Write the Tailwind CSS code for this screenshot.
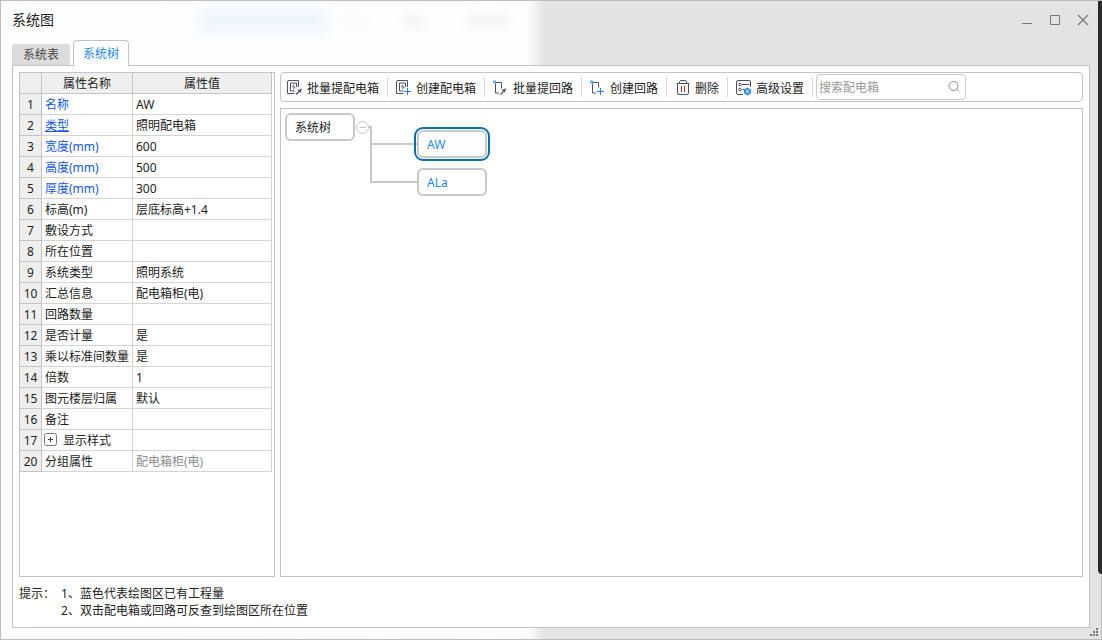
<!DOCTYPE html>
<html lang="zh-CN">
<head>
<meta charset="utf-8">
<meta name="viewport" content="width=device-width, initial-scale=1">
<title>系统图</title>
<script src="https://cdn.jsdelivr.net/npm/@tailwindcss/browser@4"></script>
</head>
<body class="font-['Noto_Sans','Noto_Sans_CJK_SC',sans-serif] text-xs text-[#222]">
<div class="relative flex min-h-screen flex-col border border-[#bdbdbd] bg-[linear-gradient(to_right,#fdfdfe_0,#fefefe_526px,#e3e3e3_544px,#e3e3e3_100%)] pr-[11px] pb-[11px] pl-[11px]">
  <div class="absolute top-2 left-[196px] h-6 w-[132px] rounded bg-[#f0f6fd] blur-[6px]"></div>
  <div class="absolute top-3 left-[342px] h-4 w-6 rounded bg-[#fafafa] blur-[5px]"></div>
  <div class="absolute top-3 left-[402px] h-4 w-6 rounded bg-[#f6f6f6] blur-[5px]"></div>
  <div class="absolute top-3 left-[464px] h-4 w-11 rounded bg-[#f6f6f6] blur-[5px]"></div>
  <div class="absolute top-0 -right-px h-[573px] w-[4px] rounded-bl-sm bg-[#2b2b2b]"></div>
  <svg class="absolute right-[3px] bottom-[3px] size-[8px]" viewBox="0 0 8 8" fill="#6f757f" shape-rendering="crispEdges" aria-hidden="true"><path d="M6 0h2v2h-2zM3 3h2v2h-2zM6 3h2v2h-2zM0 6h2v2h-2zM3 6h2v2h-2zM6 6h2v2h-2z"/></svg>

  <header class="relative flex h-[39px] items-center justify-between pr-px pb-[2px]">
    <h1 class="text-sm text-[#222]">系统图</h1>
    <div class="flex gap-4 text-[#777]">
      <button aria-label="最小化" class="size-3"><svg class="size-3" viewBox="0 0 12 12" fill="none" stroke="currentColor"><path d="M1 9.500h10"/></svg></button>
      <button aria-label="最大化" class="size-3"><svg class="size-3" viewBox="0 0 12 12" fill="none" stroke="currentColor"><path d="M1.500 1.500h9v9h-9z"/></svg></button>
      <button aria-label="关闭" class="size-3"><svg class="size-3" viewBox="0 0 12 12" fill="none" stroke="currentColor" stroke-width="1.200"><path d="M1 1l10 10M11 1L1 11"/></svg></button>
    </div>
  </header>

  <div role="tablist" class="relative z-10 -mb-px flex items-end gap-[3px]">
    <button role="tab" aria-selected="false" class="mb-px h-[21px] w-[58px] rounded-t-[3px] bg-[#dcdcdc] text-[#444]">系统表</button>
    <button role="tab" aria-selected="true" class="h-[26px] w-14 rounded-t border border-b-0 border-[#c4c4c8] bg-white pt-px text-[#1a86f2]">系统树</button>
  </div>

  <main class="relative flex flex-1 flex-col border border-[#c4c4c8] bg-white px-[6px] pt-[6px] pb-2">
    <div class="flex flex-1 gap-[5px]">
      <section class="w-64 shrink-0 border border-[#c4c4c8]">
        <table class="w-[252px] table-fixed border-separate border-spacing-0 leading-4 [&_td]:h-[21px] [&_td]:border-r [&_td]:border-b [&_td]:border-[#d4d4d4] [&_td]:pt-[2px] [&_td]:pr-0 [&_td]:pb-0 [&_td]:pl-[3px] [&_td]:whitespace-nowrap [&_th]:h-[21px] [&_th]:border-r [&_th]:border-b [&_th]:border-[#c4c4c4] [&_th]:bg-[#efefef] [&_th]:px-0 [&_th]:pt-[2px] [&_th]:pb-0 [&_th]:font-normal">
          <colgroup><col class="w-[22px]"><col class="w-[91px]"><col class="w-[139px]"></colgroup>
          <thead><tr><th></th><th scope="col">属性名称</th><th scope="col">属性值</th></tr></thead>
          <tbody>
            <tr><th scope="row">1</th><td class="text-[#1256f5]">名称</td><td>AW</td></tr>
            <tr><th scope="row">2</th><td class="text-[#1256f5]"><a href="#" class="underline underline-offset-1">类型</a></td><td>照明配电箱</td></tr>
            <tr><th scope="row">3</th><td class="text-[#1256f5]">宽度(mm)</td><td>600</td></tr>
            <tr><th scope="row">4</th><td class="text-[#1256f5]">高度(mm)</td><td>500</td></tr>
            <tr><th scope="row">5</th><td class="text-[#1256f5]">厚度(mm)</td><td>300</td></tr>
            <tr><th scope="row">6</th><td>标高(m)</td><td>层底标高+1.4</td></tr>
            <tr><th scope="row">7</th><td>敷设方式</td><td></td></tr>
            <tr><th scope="row">8</th><td>所在位置</td><td></td></tr>
            <tr><th scope="row">9</th><td>系统类型</td><td>照明系统</td></tr>
            <tr><th scope="row">10</th><td>汇总信息</td><td>配电箱柜(电)</td></tr>
            <tr><th scope="row">11</th><td>回路数量</td><td></td></tr>
            <tr><th scope="row">12</th><td>是否计量</td><td>是</td></tr>
            <tr><th scope="row">13</th><td>乘以标准间数量</td><td>是</td></tr>
            <tr><th scope="row">14</th><td>倍数</td><td>1</td></tr>
            <tr><th scope="row">15</th><td>图元楼层归属</td><td>默认</td></tr>
            <tr><th scope="row">16</th><td>备注</td><td></td></tr>
            <tr><th scope="row">17</th><td class="pl-[2px]!"><div class="flex items-start gap-[6px]"><button aria-label="展开显示样式" class="size-[13px]"><svg class="size-[13px]" viewBox="0 0 13 13" fill="none" stroke="#777"><rect x=".5" y=".5" width="12" height="12" rx="2"/><path d="M4 6.500h5M6.500 4v5" stroke="#444"/></svg></button>显示样式</div></td><td></td></tr>
            <tr><th scope="row">20</th><td>分组属性</td><td class="text-[#8c8c8c]">配电箱柜(电)</td></tr>
          </tbody>
        </table>
      </section>

      <section class="flex min-w-0 flex-1 flex-col gap-[6px]">
        <div role="toolbar" class="flex h-[30px] items-center rounded border border-[#c4c4c8] [&>button]:flex [&>button]:h-5 [&>button]:shrink-0 [&>button]:items-center [&>button]:gap-1 [&>button]:border-r [&>button]:border-[#d8d8dc] [&>button]:px-2 [&>button]:pt-[2px] [&>button]:whitespace-nowrap [&_span]:pt-px [&_svg]:size-4 [&_svg]:shrink-0">
          <button class="pl-[6px]!"><svg viewBox="0 0 16 16" fill="none" stroke="#4a5068"><path d="M11.500 7V.5H2A1.500 1.500 0 0 0 .5 2v11.500h7"/><path d="M9.500 7V3h-6v8h4"/><path d="M7.300 4.500L5.500 7H8L6.300 9.500" stroke-width=".9"/><path d="M9 14.500l3-3" stroke-width="1.300"/><path d="M11.300 9.800l2.700 2.700M12.500 11.300l2-2.300" stroke-width="1.600"/></svg><span>批量提配电箱</span></button>
          <button><svg viewBox="0 0 16 16" fill="none" stroke="#4a5068"><path d="M11.500 7V.5H2A1.500 1.500 0 0 0 .5 2v11.500h7"/><path d="M9.500 7V3h-6v8h4"/><path d="M7.300 4.500L5.500 7H8L6.300 9.500" stroke-width=".9"/><path d="M11.500 8v7M8 11.500h7" stroke="#1a80ee"/></svg><span>创建配电箱</span></button>
          <button><svg viewBox="0 0 16 16" fill="none" stroke="#4a5068"><path d="M3 2.500h5.500v6M2.500 3.500v9.500H6"/><path d="M7.500 14.500l3-3" stroke-width="1.300"/><path d="M9.500 9.500l2.500 2.500M10.700 11l2-2.300" stroke-width="1.600"/><circle cx="1.700" cy="2" r="1.200" stroke="#1a80ee"/></svg><span>批量提回路</span></button>
          <button><svg viewBox="0 0 16 16" fill="none" stroke="#4a5068"><path d="M3 2.500h5.500v5M2.500 3.500v9.500H6"/><path d="M10.500 8v7M7 11.500h7" stroke="#1a80ee"/><circle cx="1.700" cy="2" r="1.200" stroke="#1a80ee"/></svg><span>创建回路</span></button>
          <button><svg viewBox="0 0 16 16" fill="none" stroke="#4a5068"><path d="M1.500 3.500h13M4.500 3V2l1-1.500h5l1 1.500v1M2.500 4v9a1.500 1.500 0 0 0 1.500 1.500h8a1.500 1.500 0 0 0 1.500-1.500V4"/><path d="M6.500 6v6M9.500 6v6" stroke="#e01f2d"/></svg><span>删除</span></button>
          <button><svg viewBox="0 0 16 16" fill="none" stroke="#4a5068"><path d="M14.500 7V2A1.500 1.500 0 0 0 13 .5H2A1.500 1.500 0 0 0 .5 2v11A1.500 1.500 0 0 0 2 14.500h5"/><path d="M6 4.500h7M6.500 9.500h2"/><circle cx="4" cy="4.500" r="1.300"/><circle cx="4" cy="9.500" r="1.300"/><path d="M11.500 8l3 1.700v3.600l-3 1.700-3-1.700V9.700z" fill="#4f9df5" stroke="#3388ee"/><circle cx="11.500" cy="11.500" r="1.200" fill="#b9d9fb" stroke="none"/></svg><span>高级设置</span></button>
          <div class="ml-[3px] flex h-[26px] w-[150px] items-center rounded border border-[#c9c9cd] pr-[3px] pl-[2px]">
            <input type="text" aria-label="搜索配电箱" placeholder="搜索配电箱" class="min-w-0 flex-1 pt-[2px] outline-none placeholder:text-[#999]">
            <svg viewBox="0 0 16 16" fill="none" stroke="#888"><circle cx="7.500" cy="7" r="4.500"/><path d="M10.800 10.300l2.200 2.200"/></svg>
          </div>
        </div>

        <div class="relative flex-1 border border-[#c4c4c8]">
          <svg class="absolute top-[12px] left-[75px] h-[64px] w-[62px]" viewBox="0 0 62 64" fill="none" stroke="#c8c8c8" stroke-width="2" aria-hidden="true"><path d="M12 6h3v55h46M15 23h46"/></svg>
          <button aria-label="折叠系统树" class="absolute top-[12px] left-[75px] size-[13px]"><svg class="size-[13px]" viewBox="0 0 13 13" fill="#fff" stroke="#c4c4c4"><circle cx="6.500" cy="6.500" r="6"/><path d="M3.500 6.500h6"/></svg></button>
          <button class="absolute top-1 left-1 h-7 w-[70px] rounded-md border-2 border-[#c8c8c8] bg-white pt-[2px] pl-2 text-left">系统树</button>
          <button class="absolute top-[21px] left-[136px] h-7 w-[70px] rounded-md border-2 border-[#c8c8c8] bg-white pt-[2px] pl-2 text-left text-[#1e88f5] outline-2 outline-offset-1 outline-[#0a6eb4]">AW</button>
          <button class="absolute top-[59px] left-[136px] h-7 w-[70px] rounded-md border-2 border-[#c8c8c8] bg-white pt-[2px] pl-2 text-left text-[#1e88f5]">ALa</button>
        </div>
      </section>
    </div>

    <footer class="mt-2 flex gap-[6px] leading-[17px]">
      <span>提示：</span>
      <div><p>1、蓝色代表绘图区已有工程量</p><p>2、双击配电箱或回路可反查到绘图区所在位置</p></div>
    </footer>
  </main>
</div>
</body>
</html>
